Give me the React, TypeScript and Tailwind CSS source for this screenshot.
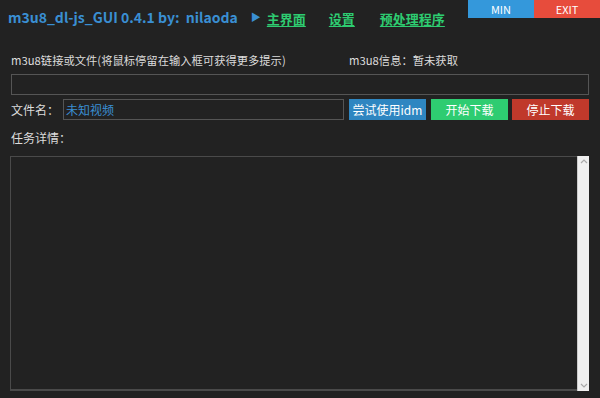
import React from 'react';

const font = { fontFamily: '"Noto Sans CJK SC", "Noto Sans", sans-serif' };

const NavLink = ({ children }: { children: React.ReactNode }) => (
  <span className="text-[13px] font-bold text-[#2ecc71] underline underline-offset-2 decoration-1 leading-none">{children}</span>
);

export default function App() {
  return (
    <div style={font} className="w-[600px] h-[398px] bg-[#222222] text-[#dcdcdc] overflow-hidden flex flex-col">
      {/* header */}
      <div className="flex items-start h-[35px]">
        <div className="flex items-center h-[33px] pl-[8px]">
          <span className="text-[14px] font-bold text-[#3a8fd3] leading-none">m3u8_dl-js_GUI 0.4.1 by:&nbsp; nilaoda</span>
          <span className="ml-[13px] text-[10px] text-[#3a8fd3] leading-none">▶</span>
          <span className="ml-[6px]"><NavLink>主界面</NavLink></span>
          <span className="ml-[23px]"><NavLink>设置</NavLink></span>
          <span className="ml-[25px]"><NavLink>预处理程序</NavLink></span>
        </div>
        <div className="ml-auto flex">
          <div className="w-[66px] h-[18px] bg-[#3498db] text-white text-[11px] flex items-center justify-center leading-none">MIN</div>
          <div className="w-[66px] h-[18px] bg-[#e74c3c] text-white text-[11px] flex items-center justify-center leading-none">EXIT</div>
        </div>
      </div>

      <div className="px-[11px] flex flex-col">
        <div className="flex items-center h-[20px] mt-[15px] text-[11.3px]">
          <span className="w-[338px]">m3u8链接或文件(将鼠标停留在输入框可获得更多提示)</span>
          <span>m3u8信息：暂未获取</span>
        </div>
        <div className="mt-[4px] h-[21px] border border-[#555] bg-[#222]" />
        <div className="mt-[4px] flex items-center h-[21px] text-[12px]">
          <span className="w-[52px]">文件名：</span>
          <div className="w-[281px] h-[21px] border border-[#555] flex items-center pl-[2px] text-[#3a8fd3] text-[12px]">未知视频</div>
          <div className="ml-[5px] w-[77px] h-[21px] bg-[#2e86c1] text-white flex items-center justify-center">尝试使用idm</div>
          <div className="ml-[5px] w-[77px] h-[21px] bg-[#2ecc71] text-white flex items-center justify-center">开始下载</div>
          <div className="ml-[4px] w-[77px] h-[21px] bg-[#c0392b] text-white flex items-center justify-center">停止下载</div>
        </div>
        <div className="mt-[8px] h-[20px] flex items-center text-[12px]">任务详情：</div>
        <div className="mt-[8px] ml-[-1px] h-[235px] flex">
          <div className="flex-1 border-t border-l border-b-2 border-[#4a4a4a] bg-[#222]" />
          <div className="w-[12px] bg-[#f0f0f0] border-l border-[#ccc] flex flex-col items-center justify-between py-[2px] text-[#aaa]">
            <svg width="8" height="6" viewBox="0 0 8 6"><path d="M1 5 L4 2 L7 5" fill="none" stroke="#aaa" strokeWidth="1.2" /></svg>
            <svg width="8" height="6" viewBox="0 0 8 6"><path d="M1 1 L4 4 L7 1" fill="none" stroke="#aaa" strokeWidth="1.2" /></svg>
          </div>
        </div>
      </div>
    </div>
  );
}
